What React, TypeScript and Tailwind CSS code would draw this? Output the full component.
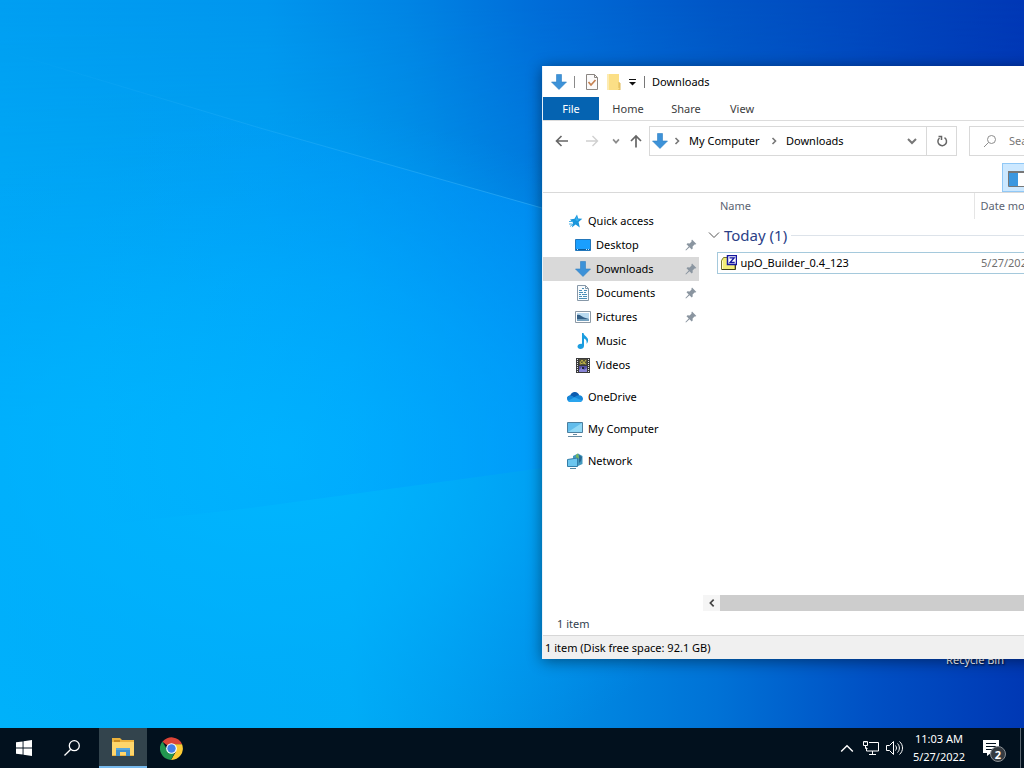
import type { ReactNode } from "react";

function Wallpaper() {
  return (
    <svg className="absolute inset-0 size-full" viewBox="0 0 1024 728" preserveAspectRatio="none" aria-hidden="true">
      <defs>
        <linearGradient id="upper" x1="0" y1="0" x2="1" y2="0">
          <stop offset="0" stopColor="#009ff2" />
          <stop offset="0.26" stopColor="#0096ee" />
          <stop offset="0.4" stopColor="#0084e4" />
          <stop offset="0.53" stopColor="#006cd8" />
          <stop offset="0.7" stopColor="#0056c6" />
          <stop offset="1" stopColor="#0038b6" />
        </linearGradient>
        <linearGradient id="lower" x1="0" y1="0" x2="1" y2="0">
          <stop offset="0" stopColor="#00b2fa" />
          <stop offset="0.34" stopColor="#00aef5" />
          <stop offset="0.53" stopColor="#008ee5" />
          <stop offset="0.7" stopColor="#0072d6" />
          <stop offset="0.85" stopColor="#0050c4" />
          <stop offset="1" stopColor="#0038b4" />
        </linearGradient>
        <linearGradient id="fade" x1="0" y1="0" x2="0" y2="1">
          <stop offset="0" stopColor="#000" />
          <stop offset="0.6" stopColor="#fff" />
        </linearGradient>
        <mask id="lowerMask">
          <rect width="1024" height="728" fill="url(#fade)" />
        </mask>
        <radialGradient id="glow" gradientUnits="userSpaceOnUse" cx="0" cy="0" r="1" gradientTransform="translate(280 450) scale(500 340)">
          <stop offset="0" stopColor="#00b8ff" stopOpacity="0.9" />
          <stop offset="0.5" stopColor="#00b0ff" stopOpacity="0.55" />
          <stop offset="1" stopColor="#00a0ff" stopOpacity="0" />
        </radialGradient>
        <linearGradient id="beam" gradientUnits="userSpaceOnUse" x1="100" y1="0" x2="542" y2="0">
          <stop offset="0" stopColor="#009cff" stopOpacity="0" />
          <stop offset="1" stopColor="#0098ff" stopOpacity="0.5" />
        </linearGradient>
        <linearGradient id="edge" gradientUnits="userSpaceOnUse" x1="0" y1="0" x2="542" y2="0">
          <stop offset="0" stopColor="#50c4ff" stopOpacity="0" />
          <stop offset="1" stopColor="#50c4ff" stopOpacity="0.4" />
        </linearGradient>
      </defs>
      <rect width="1024" height="728" fill="url(#upper)" />
      <rect width="1024" height="728" fill="url(#lower)" mask="url(#lowerMask)" />
      <rect width="1024" height="728" fill="url(#glow)" />
      <path d="M0 50 260 128 542 208V468L250 508 0 537Z" fill="url(#beam)" />
      <path d="M0 50 260 128 542 208" fill="none" stroke="url(#edge)" />
    </svg>
  );
}

function DownArrow({ className = "" }: { className?: string }) {
  return (
    <svg className={`size-4 shrink-0 ${className}`} viewBox="0 0 16 16" aria-hidden="true">
      <path d="M5.5.5h5V8h5L8 15.5.5 8h5Z" fill="#3d92d8" />
      <path d="M5.5.5h5V8h5L8 15.5.5 8h5Z" fill="none" stroke="#2f7fc4" strokeWidth="0.6" />
    </svg>
  );
}

function Chevron({ d, className = "" }: { d: string; className?: string }) {
  return (
    <svg className={`shrink-0 ${className}`} viewBox="0 0 12 12" fill="none" stroke="currentColor" aria-hidden="true">
      <path d={d} />
    </svg>
  );
}

function Pin() {
  return (
    <svg className="size-3 shrink-0" viewBox="0 0 12 12" aria-hidden="true">
      <path d="M7 .6 11.4 5l-1.2.6-.7-.2-1.9 2 .1 2.1-1 1-2.2-2.2L1 11.6.4 11l3.3-3.5-2.2-2.2 1-1 2.1.1 2-1.9-.2-.7Z" fill="#8a95a0" />
    </svg>
  );
}

function StarIcon() {
  return (
    <svg className="size-4" viewBox="0 0 16 16" aria-hidden="true">
      <path d="m10 1.500 1.200 4 4.100.3-3.700 3.100 1.200 5.600-4.200-3-3.800 3 1.200-4.700L3 6.500l4.500-.8Z" fill="#1a96dc" />
      <path d="M2 8.500h4M2 11h3M3 13.500l3-2.500" stroke="#43aee6" />
      <path d="m9.800 3 .7 3.200 2 .3-2.200 1.600L8.400 7Z" fill="#3bb4f0" />
    </svg>
  );
}

function DesktopIcon() {
  return (
    <svg className="size-4" viewBox="0 0 16 16" aria-hidden="true">
      <path d="M.5 2.5h15v11H.5z" fill="#1a9fff" stroke="#2277bb" />
      <path d="M1 12.5h14" stroke="#0c5c9c" />
      <path d="M2 12.5h1m10 0h1m-3 0h1" stroke="#bfe4ff" />
    </svg>
  );
}

function DocumentIcon() {
  return (
    <svg className="size-4" viewBox="0 0 16 16" aria-hidden="true">
      <path d="M2.5.5h8l3 3v12h-11z" fill="#f8fbfd" stroke="#8798a8" />
      <path d="M10.5.5v3h3" fill="none" stroke="#8798a8" />
      <path d="M7 3.500h2M4 5.500h3M9 5.500h3M4 7.500h4M9 7.500h2M4 9.500h2M7 9.500h5M4 11.500h3M8 11.500h4M4 13.500h8" stroke="#4a8fb8" />
    </svg>
  );
}

function PictureIcon() {
  return (
    <svg className="size-4" viewBox="0 0 16 16" aria-hidden="true">
      <path d="M.5 2.500h15v11H.5z" fill="#fff" stroke="#8d9aa6" />
      <path d="M2 4h12v8H2z" fill="#b9daf0" />
      <path d="M2 6c3-1 5 2 7 2.500L14 10v2H2Z" fill="#335f86" />
      <path d="M2 10h12v2H2z" fill="#75a1bf" />
    </svg>
  );
}

function MusicIcon() {
  return (
    <svg className="size-4" viewBox="0 0 16 16" aria-hidden="true">
      <path d="M7 0h1.500c.3 3 5 4 4.600 7.500-.1 1.500-.8 2.500-1.600 3.300.7-2.800-.4-4.400-2.500-5.300v7.200C9 14.800 7.300 16 5.400 16 3.700 16 2.500 15 2.500 13.600c0-1.800 2-3 4.500-2.700Z" fill="#1b9de0" />
    </svg>
  );
}

function VideoIcon() {
  return (
    <svg className="size-4" viewBox="0 0 16 16" aria-hidden="true">
      <path d="M1 1h14v15H1z" fill="#3a3a3c" />
      <path d="M2.500 2v14M13.500 2v14" stroke="#e8e8e8" strokeDasharray="1 1" />
      <path d="M4 2h8v6H4z" fill="#54523c" />
      <path d="M4 9h8v6H4z" fill="#5550a8" />
      <path d="m5 6 2-3 2 3 2-3M5 7l3-1 3 1" stroke="#c3b648" fill="none" />
      <path d="m4 13 3-3 2 3 3-2v4H4Z" fill="#8985d6" />
      <path d="M7 10h2v2H7z" fill="#23223c" />
    </svg>
  );
}

function CloudIcon() {
  return (
    <svg className="size-4" viewBox="0 0 16 16" aria-hidden="true">
      <path d="M3.200 6.500C4 4 6 2.800 8 3c2 .1 3.600 1.300 4.300 3.200l-4 4.300L0 9.500c.1-1.700 1.500-3 3.200-3Z" fill="#0b5cb0" />
      <path d="M12.300 6.200c2.100.1 3.700 1.600 3.700 3.500 0 1.800-1.400 3.300-3.200 3.300H3.500C1.500 13 0 11.500 0 9.700 0 8 1.500 6.500 3.300 6.400c1.700 0 2.700 1 4.200 1.900 1.400-1.200 2.800-2.200 4.800-2.100Z" fill="#1687d9" />
      <path d="m1 11.700 6.500-3.400 7.700 3.300c-.6.900-1.300 1.400-2.400 1.400H3.500C2.400 13 1.500 12.500 1 11.700Z" fill="#2aa5ee" />
    </svg>
  );
}

function ComputerIcon() {
  return (
    <svg className="size-4" viewBox="0 0 16 16" aria-hidden="true">
      <path d="M.5 1.500h15v10H.5z" fill="#62bdec" stroke="#4d7f9e" />
      <path d="M1 11 15 2v9Z" fill="#91d8f5" />
      <path d="M6 13.500h4M1 15.500h14" stroke="#678ba2" />
    </svg>
  );
}

function NetworkIcon() {
  return (
    <svg className="size-4" viewBox="0 0 16 16" aria-hidden="true">
      <path d="M11 .5 15.500 3v8L11 13 6 10V3Z" fill="#4298bd" />
      <path d="m9 2 2-1.500L12 5l-3 3Z" fill="#78b65b" />
      <path d="m12 2 3 2-1 4-2 2Z" fill="#276996" />
      <path d="M.5 6.500 10.500 5v8.500H.5z" fill="#6bc6ef" stroke="#347ea8" />
      <path d="M3 15.500h6" stroke="#5387a2" />
    </svg>
  );
}

type Place = { label: string; icon: ReactNode; pinned?: boolean; active?: boolean };

const quickAccess: Place[] = [
  { label: "Desktop", icon: <DesktopIcon />, pinned: true },
  { label: "Downloads", icon: <DownArrow />, pinned: true, active: true },
  { label: "Documents", icon: <DocumentIcon />, pinned: true },
  { label: "Pictures", icon: <PictureIcon />, pinned: true },
  { label: "Music", icon: <MusicIcon /> },
  { label: "Videos", icon: <VideoIcon /> },
];

const roots: Place[] = [
  { label: "OneDrive", icon: <CloudIcon /> },
  { label: "My Computer", icon: <ComputerIcon /> },
  { label: "Network", icon: <NetworkIcon /> },
];

function Sidebar() {
  return (
    <nav className="w-[156px] shrink-0 pt-4" aria-label="Folders">
      <a href="#quick" className="flex h-6 items-center gap-[5px] pl-6">
        <StarIcon />
        Quick access
      </a>
      {quickAccess.map((p) => (
        <a key={p.label} href="#folder" className={`flex h-6 items-center gap-[5px] pr-[2px] pl-8 ${p.active ? "bg-[#d9d9d9]" : ""}`}>
          {p.icon}
          <span className="flex-1">{p.label}</span>
          {p.pinned && <Pin />}
        </a>
      ))}
      {roots.map((p) => (
        <a key={p.label} href="#root" className="mt-2 flex h-6 items-center gap-[5px] pl-6">
          {p.icon}
          {p.label}
        </a>
      ))}
    </nav>
  );
}

function FileList() {
  return (
    <div className="flex min-w-0 flex-1 flex-col">
      <table className="ml-[9px] w-[640px] table-fixed border-collapse text-left">
        <colgroup>
          <col className="w-[9px]" />
          <col className="w-[257px]" />
          <col />
        </colgroup>
        <thead>
          <tr className="h-[26px] text-[#5b6472]">
            <td />
            <th className="pl-[3px] font-normal">Name</th>
            <th className="border-l border-[#e5e5e5] pl-[6px] font-normal">Date modified</th>
          </tr>
        </thead>
        <tbody>
          <tr className="h-[33px]">
            <td colSpan={3}>
              <div className="flex items-center text-[#2b3f87]">
                <Chevron d="M1 3.500 6 8.500 11 3.500" className="size-3 text-[#555]" />
                <span className="ml-1 text-[15px] leading-5">Today (1)</span>
                <span className="ml-1 h-px flex-1 bg-[#dde3ea]" />
              </div>
            </td>
          </tr>
          <tr className="h-[21px]">
            <td />
            <td className="border-y border-l border-[#a5c9dc] pl-[3px]">
              <div className="flex items-center gap-1 text-black">
                <svg className="size-4 shrink-0" viewBox="0 0 16 16" aria-hidden="true">
                  <path d="M.5 5.500 2.500 2.500H7v3h7v9H.5Z" fill="#f3ee78" stroke="#77752c" />
                  <path d="M1.500 6v8" stroke="#fffcc4" />
                  <path d="M14.500 8v6.500H1" stroke="#3f3e17" fill="none" />
                  <path d="M6.500.5h9v9h-9z" fill="#fff" stroke="#1417a0" strokeWidth="1.500" />
                  <path d="M8.500 2.800h4.700L9 7.500h4.700" fill="none" stroke="#1417a0" strokeWidth="1.300" />
                </svg>
                upO_Builder_0.4_123
              </div>
            </td>
            <td className="border-y border-[#a5c9dc] pl-[7px] text-[#707070]">5/27/2022 11:03 AM</td>
          </tr>
        </tbody>
      </table>
      <div className="mt-auto flex h-4 pl-1">
        <button aria-label="Scroll left" className="flex w-[17px] items-center justify-center bg-[#f5f5f5]">
          <Chevron d="M8 2 4 6l4 4" className="size-[10px] stroke-2 text-[#444]" />
        </button>
        <div className="flex-1 bg-[#cdcdcd]" />
      </div>
    </div>
  );
}

function ExplorerWindow() {
  return (
    <section
      aria-label="Downloads"
      className="absolute top-[66px] left-[542px] flex h-[593px] w-[720px] flex-col border-l border-[#e8f2fa] bg-white text-black shadow-[0_2px_14px_rgba(0,0,0,0.45)]"
    >
      <header className="flex h-[31px] shrink-0 items-center pl-2">
        <DownArrow />
        <span className="ml-[7px] h-3 w-px bg-[#8a8a8a]" />
        <button aria-label="Properties" className="ml-[9px]">
          <svg className="size-4" viewBox="0 0 16 16" fill="none" aria-hidden="true">
            <path d="M2.500.5h8l3 3v12h-11z" fill="#fbfafa" stroke="#8b8682" />
            <path d="M10.500.5v3h3" stroke="#8b8682" />
            <path d="m4.500 8 2.500 3 4.500-5" stroke="#c58253" strokeWidth="1.700" />
          </svg>
        </button>
        <button aria-label="New folder" className="ml-[6px]">
          <svg className="size-4" viewBox="0 0 16 16" aria-hidden="true">
            <path d="M1 0h12v8l1 1v7H1Z" fill="#fbdf86" />
            <path d="M1 0h2v16H1z" fill="#fdebb1" />
            <path d="M13 8v6M14 9v7h-2" stroke="#dfb957" fill="none" />
          </svg>
        </button>
        <button aria-label="Customize toolbar" className="ml-[5px]">
          <svg className="size-[10px]" viewBox="0 0 10 10" aria-hidden="true">
            <path d="M2 2.500h7" stroke="#111" />
            <path d="M2 5h7L5.500 8.500Z" fill="#111" />
          </svg>
        </button>
        <span className="mx-[7px] h-3 w-px bg-[#777]" />
        <h1>Downloads</h1>
      </header>
      <div className="flex h-6 shrink-0 border-b border-[#dcdcdc] text-[#3c3c3c]">
        <button className="w-14 bg-[#0563b1] text-white">File</button>
        <button className="w-[58px]">Home</button>
        <button className="w-[58px]">Share</button>
        <button className="w-[54px]">View</button>
      </div>
      <div className="flex h-10 shrink-0 items-center pl-3 text-[#666]">
        <button aria-label="Back">
          <svg className="size-[14px]" viewBox="0 0 14 14" fill="none" stroke="#666" strokeWidth="1.600" aria-hidden="true">
            <path d="M13 7H1.500M6.500 2l-5 5 5 5" />
          </svg>
        </button>
        <button aria-label="Forward" className="ml-4">
          <svg className="size-[14px]" viewBox="0 0 14 14" fill="none" stroke="#d0d0d0" strokeWidth="1.400" aria-hidden="true">
            <path d="M1 7h11.500M7.500 2l5 5-5 5" />
          </svg>
        </button>
        <button aria-label="Recent locations" className="ml-3">
          <Chevron d="m2.500 4 3.500 4 3.500-4" className="size-[10px] stroke-2 text-[#8d8d8d]" />
        </button>
        <button aria-label="Up" className="ml-2">
          <svg className="size-[14px]" viewBox="0 0 14 14" fill="none" stroke="#666" strokeWidth="1.700" aria-hidden="true">
            <path d="M7 13.500V2M2 7l5-5 5 5" />
          </svg>
        </button>
        <div className="ml-[6px] flex h-[30px] w-[308px] items-center border border-[#d9d9d9] pl-[2px] whitespace-nowrap text-black">
          <DownArrow />
          <Chevron d="m4.500 3 3 3-3 3" className="ml-[3px] size-3 stroke-[1.6] text-[#777]" />
          <a href="#computer" className="ml-[6px] w-[79px]">My Computer</a>
          <Chevron d="m4.500 3 3 3-3 3" className="size-3 stroke-[1.6] text-[#777]" />
          <a href="#downloads" className="ml-[6px] flex-1">Downloads</a>
          <button aria-label="Previous locations" className="flex w-7 justify-center">
            <Chevron d="m2 4 4 4 4-4" className="size-3 stroke-2 text-[#777]" />
          </button>
          <button aria-label="Refresh" className="flex h-full w-[30px] items-center justify-center border-l border-[#d9d9d9]">
            <svg className="size-3" viewBox="0 0 12 12" fill="none" stroke="#666" strokeWidth="1.500" aria-hidden="true">
              <path d="M8.500 2.700A4.300 4.300 0 1 1 3.500 3M2.500 1.500h3V5" />
            </svg>
          </button>
        </div>
        <label className="ml-3 flex h-[30px] w-[220px] items-center border border-[#d9d9d9] pl-[13px]">
          <svg className="size-[14px] shrink-0" viewBox="0 0 14 14" fill="none" stroke="#8d8d8d" aria-hidden="true">
            <circle cx="8.500" cy="5.500" r="4" />
            <path d="M5.500 8.500 1 13" />
          </svg>
          <input aria-label="Search Downloads" placeholder="Search Downloads" className="ml-[12px] w-40 bg-transparent outline-none placeholder:text-[#777]" />
        </label>
      </div>
      <div className="flex h-8 shrink-0 items-end border-b border-[#d9d9d9] pl-[459px]">
        <button aria-label="Preview pane" className="flex h-[29px] w-10 items-center border border-[#90c8f6] bg-[#cce8ff] pt-[3px] pl-[5px]">
          <svg className="h-[18px] w-7" viewBox="0 0 28 18" aria-hidden="true">
            <path d="M.5 1.500h27v15H.5z" fill="#fff" stroke="#777" />
            <path d="M0 1h28v2H0z" fill="#777" />
            <path d="M1 3h9v13H1z" fill="#3b97df" />
          </svg>
        </button>
      </div>
      <div className="flex min-h-0 flex-1">
        <Sidebar />
        <FileList />
      </div>
      <p className="h-6 shrink-0 pl-[14px] leading-[26px] text-[#333f50]">1 item</p>
      <footer className="h-6 shrink-0 border-t border-[#d7d7d7] bg-[#f0f0f0] pl-[2px] leading-6">1 item (Disk free space: 92.1 GB)</footer>
    </section>
  );
}

function Taskbar() {
  return (
    <footer className="relative flex h-10 shrink-0 items-center bg-[#02111e] text-white">
      <button aria-label="Start" className="flex h-full w-12 items-center justify-center">
        <svg className="size-4" viewBox="0 0 16 16" fill="#fff" aria-hidden="true">
          <path d="M0 2.300 6.600 1.400v6.200H0ZM7.500 1.200 16 0v7.600H7.500ZM0 8.400h6.600v6.200L0 13.700ZM7.500 8.400H16V16l-8.500-1.200Z" />
        </svg>
      </button>
      <button aria-label="Search" className="flex h-full w-12 items-center justify-center">
        <svg className="size-4" viewBox="0 0 16 16" fill="none" stroke="#fff" strokeWidth="1.300" aria-hidden="true">
          <circle cx="10.300" cy="5.700" r="5" />
          <path d="M6.800 9.200.5 15.500" />
        </svg>
      </button>
      <button aria-label="File Explorer" className="ml-[3px] flex h-full w-12 items-center justify-center border-b-2 border-[#76b9ed] bg-[#33444d]">
        <svg className="h-[18px] w-[22px]" viewBox="0 0 22 18" aria-hidden="true">
          <path d="M0 0h8l2 2h12v16H0Z" fill="#eeb33c" />
          <path d="M2 2h6v2H2z" fill="#c98a20" />
          <path d="M0 4h22v13H0z" fill="#ffd66b" />
          <path d="M4 10h14v8h-4v-4H8v4H4z" fill="#3f8fca" />
          <path d="M4 10h14v2H4z" fill="#5aa8db" />
        </svg>
      </button>
      <button aria-label="Google Chrome" className="flex h-full w-[49px] items-center justify-center">
        <svg className="size-[23px]" viewBox="0 0 24 24" aria-hidden="true">
          <path d="M12 12 2.500 5A12 12 0 0 1 23 7.500H12Z" fill="#dc4437" />
          <path d="M12 7.500h11A12 12 0 0 1 11.500 24l5-8.500Z" fill="#fccb35" />
          <path d="M2.500 4.700 7.800 14 16 15l-4.600 9A12 12 0 0 1 2.500 4.700Z" fill="#229750" />
          <circle cx="12" cy="12" r="5.600" fill="#fff" />
          <circle cx="12" cy="12" r="4.400" fill="#427fe9" />
        </svg>
      </button>
      <div className="ml-auto flex h-full items-center">
        <button aria-label="Show hidden icons">
          <Chevron d="m1 9 5-5 5 5" className="size-[14px] stroke-[1.2]" />
        </button>
        <button aria-label="Network" className="ml-[8px]">
          <svg className="h-4 w-[18px]" viewBox="0 0 18 16" fill="none" stroke="#fff" aria-hidden="true">
            <path d="M7 2.500h9.500v8.500h-12V7.500M10.500 11v3.500M7 14.500h7" />
            <path d="M1.500 1.500h4v4h-4zM3.500 5.500v3h2" />
            <path d="M3 1v2m1-2v2" strokeWidth="0.6" />
          </svg>
        </button>
        <button aria-label="Volume" className="ml-[6px]">
          <svg className="h-4 w-[18px]" viewBox="0 0 18 16" fill="none" stroke="#fff" aria-hidden="true">
            <path d="M.5 5.500h3l4-4v13l-4-4h-3Z" />
            <path d="M9.500 5.500c1.300 1.500 1.300 3.500 0 5M11.500 3.500c2.500 2.500 2.500 6.500 0 9M13.500 1.500c4 3.500 4 9.500 0 13" />
          </svg>
        </button>
        <button className="ml-[7px] w-14 text-center leading-[18px]">
          11:03 AM
          <br />
          5/27/2022
        </button>
        <button aria-label="Notifications, 2 new" className="relative ml-[15px] mr-[10px] size-7">
          <svg className="absolute top-[5px] left-0 h-[18px] w-[18px]" viewBox="0 0 18 18" aria-hidden="true">
            <path d="M1 1h16v13H9l-4 3v-3H1Z" fill="#fff" />
            <path d="M4 4.500h10M4 7.500h10M4 10.500h7" stroke="#02111e" />
          </svg>
          <span className="absolute top-[12px] left-2 flex size-4 items-center justify-center rounded-full border border-[#8a8f94] bg-[#353b41] leading-none font-bold">2</span>
        </button>
        <span className="mr-[3px] h-full w-px bg-[#5a6670]" />
      </div>
    </footer>
  );
}

export default function App() {
  return (
    <div className="flex h-screen flex-col overflow-hidden bg-[#0070dc] font-['Noto_Sans','Open_Sans',sans-serif] text-[11px] leading-4">
      <main className="relative flex-1 overflow-hidden">
        <Wallpaper />
        <span className="absolute right-[20px] bottom-[60px] text-white [text-shadow:1px_1px_2px_#000]">Recycle Bin</span>
        <ExplorerWindow />
      </main>
      <Taskbar />
    </div>
  );
}
